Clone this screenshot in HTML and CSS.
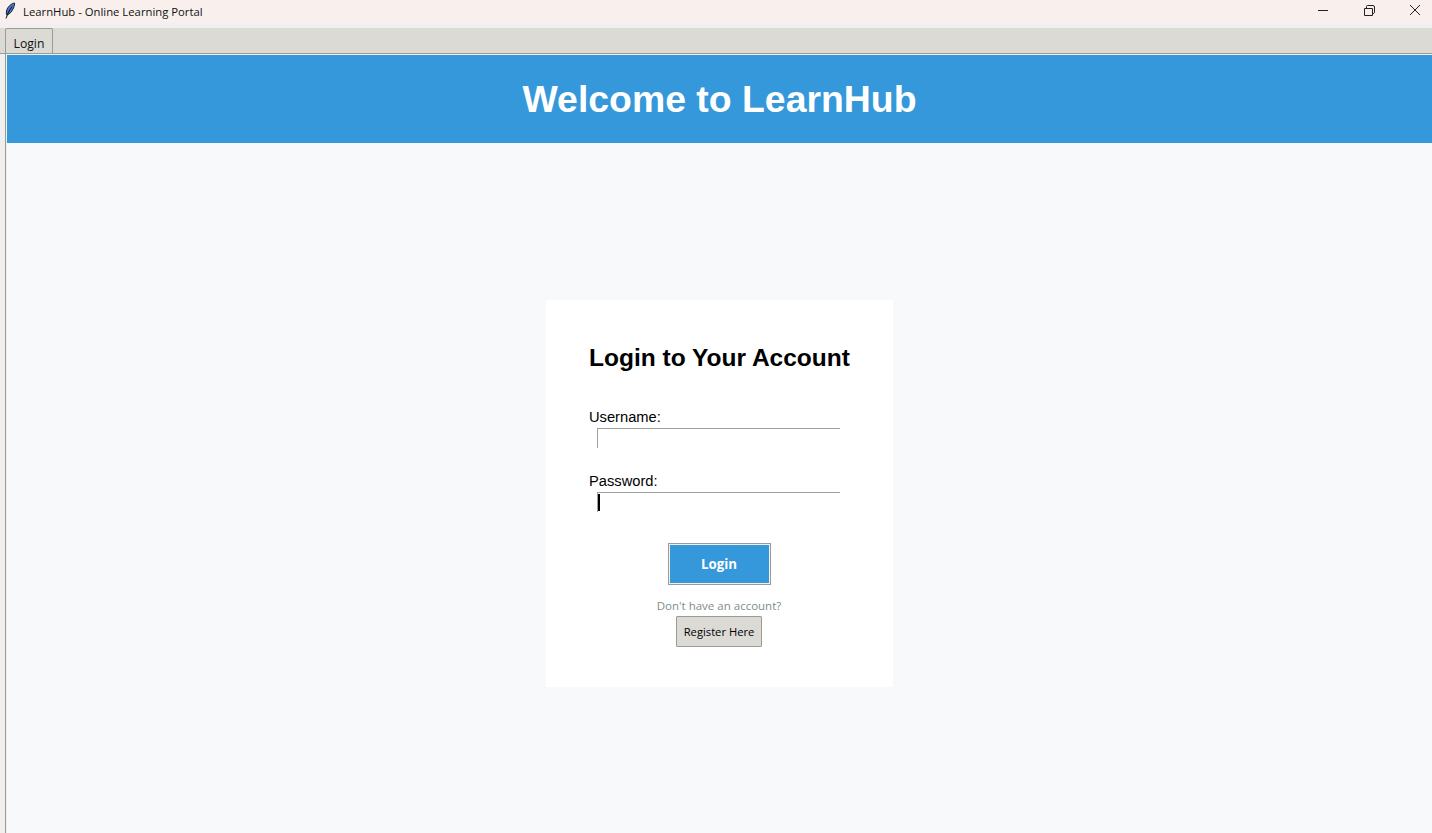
FILE: index.html
```html
<!DOCTYPE html>
<html lang="en">
<head>
    <meta charset="UTF-8">
    <title>LearnHub - Online Learning Portal</title>
    <link rel="stylesheet" href="styles.css">
</head>
<body>
    <div class="titlebar">
        <div class="title-left">
            <svg class="feather" width="12" height="18" viewBox="0 0 12 18">
                <path d="M10.500 1C7.500 1.500 3.500 4.500 2.500 9 2.200 10.500 2.300 12 2.800 13 5.500 12.500 8 9.500 9.500 6 10.300 4 10.800 2.300 10.500 1Z" fill="#4a76c4" stroke="#14213f" stroke-width="1"/>
                <path d="M8 4.500 4.500 10 2 16.500" fill="none" stroke="#111" stroke-width="1"/>
            </svg>
            <span>LearnHub - Online Learning Portal</span>
        </div>
        <div class="window-btns">
            <svg width="46" height="23" viewBox="-6 0 46 23"><path d="M18 10.500H28" stroke="#222" fill="none"/></svg>
            <svg width="46" height="23" viewBox="-6 0 46 23"><path d="M18.500 8.500H26.500V15.500H18.500ZM20.500 8.500V6.500Q20.500 5.500 21.500 5.500H27Q28.500 5.500 28.500 7V12.500Q28.500 13.500 26.500 13.500" stroke="#222" fill="none"/></svg>
            <svg width="46" height="23" viewBox="-6 0 46 23"><path d="M18 5L28 15M28 5L18 15" stroke="#222" fill="none"/></svg>
        </div>
    </div>

    <div class="tabstrip">
        <div class="tabbar">
            <div class="tab">Login</div>
        </div>
    </div>

    <div class="main">
        <div class="header">
            <h1>Welcome to LearnHub</h1>
        </div>
        <div class="content">
            <div class="card">
                <h2>Login to Your Account</h2>
                <label for="username">Username:</label>
                <input type="text" id="username">
                <label for="password" class="second">Password:</label>
                <div class="field">
                    <input type="password" id="password">
                    <span class="caret"></span>
                </div>
                <button class="btn-login">Login</button>
                <p class="hint">Don't have an account?</p>
                <button class="btn-register">Register Here</button>
            </div>
        </div>
    </div>
</body>
</html>
```

FILE: styles.css
```css
html, body {
    margin: 0;
    height: 100%;
    overflow: hidden;
}

body {
    display: flex;
    flex-direction: column;
    background-color: #f0f0f0;
    font-family: "Liberation Sans", Arial, sans-serif;
}

.titlebar {
    height: 23px;
    flex: none;
    display: flex;
    justify-content: space-between;
    background-color: #f9f0ee;
}

.title-left {
    display: flex;
    align-items: center;
    gap: 7px;
    padding-left: 4px;
    font-family: "Open Sans", sans-serif;
    font-size: 11.3px;
    color: #111;
}

.feather {
    flex: none;
    margin-top: -2px;
}

.window-btns {
    display: flex;
}

.window-btns svg {
    display: block;
}

.tabstrip {
    flex: none;
    padding-top: 5px;
}

.tabbar {
    height: 25px;
    background-color: #dcdad5;
    border-bottom: 1px solid #9e9a91;
    padding-left: 5px;
}

.tab {
    width: 48px;
    height: 25px;
    box-sizing: border-box;
    border: 1px solid #9e9a91;
    border-bottom: none;
    border-radius: 2px 2px 0 0;
    background-color: #dcdad5;
    font-family: "Open Sans", sans-serif;
    font-size: 12.2px;
    line-height: 29px;
    text-align: center;
    color: #111;
}

.main {
    flex: 1;
    display: flex;
    flex-direction: column;
    margin-left: 5px;
    padding-top: 1px;
    border-left: 1px solid #9e9a91;
    background-color: #f0f0f0;
    padding-left: 1px;
}

.header {
    height: 88px;
    flex: none;
    display: flex;
    align-items: center;
    justify-content: center;
    background-color: #3498db;
}

h1 {
    margin: 0;
    font-size: 37.4px;
    font-weight: bold;
    color: white;
}

.content {
    flex: 1;
    padding-top: 157px;
    background-color: #f8f9fa;
}

.card {
    width: 347px;
    height: 387px;
    box-sizing: border-box;
    margin: 0 auto;
    padding: 44px 43px 0;
    background-color: white;
    display: flex;
    flex-direction: column;
    align-items: flex-start;
}

h2 {
    margin: 0 0 36px;
    align-self: center;
    font-size: 24.5px;
    line-height: 28px;
    font-weight: bold;
    color: black;
    white-space: nowrap;
}

label {
    font-size: 14.7px;
    line-height: 18px;
    color: black;
}

label.second {
    margin-top: 24px;
}

input {
    display: block;
    width: 243px;
    height: 20px;
    margin: 2px 0 0 8px;
    padding: 0;
    box-sizing: border-box;
    border: none;
    border-top: 1px solid #a0a0a0;
    border-left: 1px solid #a0a0a0;
    outline: none;
    background: white;
}

.field {
    position: relative;
}

.caret {
    position: absolute;
    left: 9px;
    top: 4px;
    width: 2px;
    height: 17px;
    background-color: black;
}

button {
    display: block;
    align-self: center;
    box-sizing: border-box;
    font-family: "Open Sans", sans-serif;
    cursor: pointer;
}

.btn-login {
    width: 103px;
    height: 42px;
    margin-top: 31px;
    margin-left: -1px;
    border: 1px solid #9e9a91;
    outline: 1px solid #eef3f6;
    outline-offset: -2px;
    background-color: #3498db;
    color: white;
    font-size: 13.3px;
    font-weight: bold;
}

.hint {
    margin: 13px 0 0;
    align-self: center;
    font-family: "Open Sans", sans-serif;
    font-size: 11.5px;
    line-height: 15px;
    color: #7f8c8d;
    margin-left: -1px;
}

.btn-register {
    width: 86px;
    height: 31px;
    margin-top: 3px;
    margin-left: -1px;
    border: 1px solid #9e9a91;
    border-radius: 1px;
    background-color: #dcdad5;
    color: black;
    font-size: 11.2px;
}
```
